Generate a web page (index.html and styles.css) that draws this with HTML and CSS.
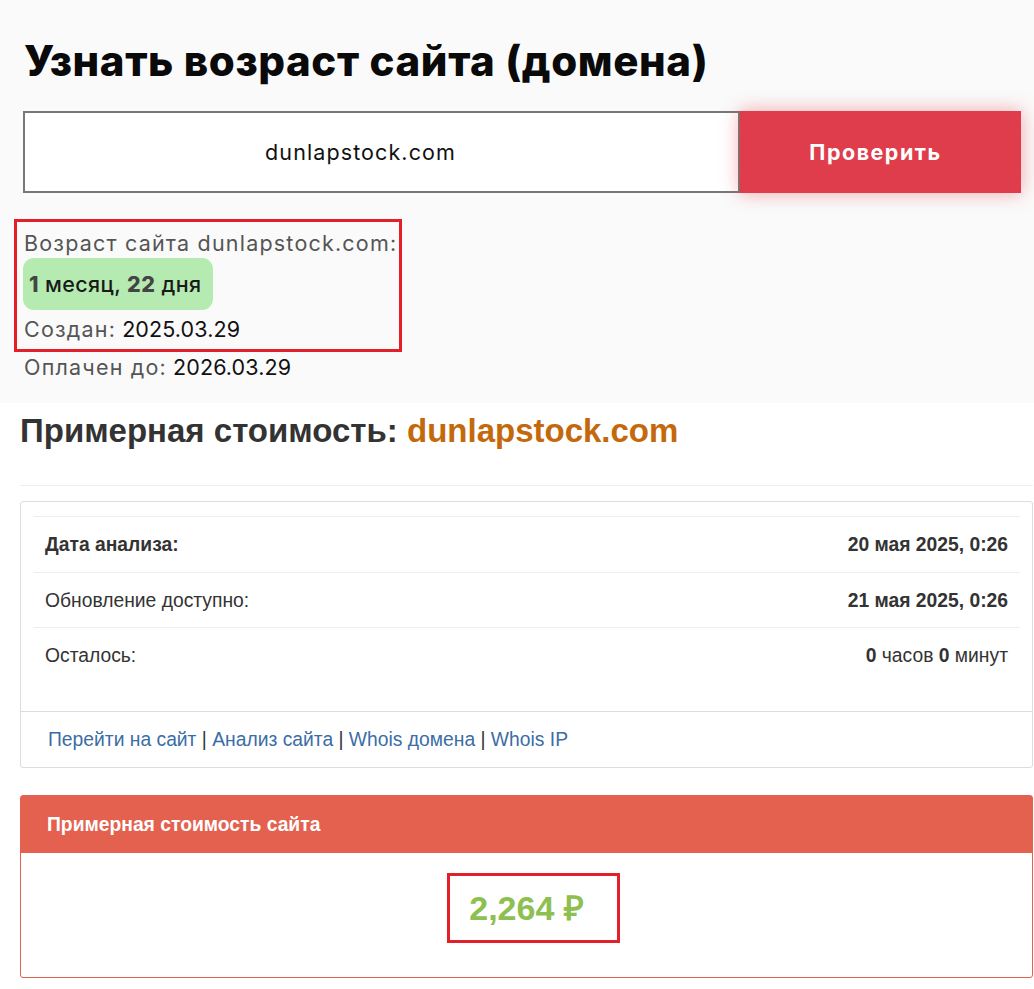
FILE: index.html
```html
<!DOCTYPE html>
<html lang="ru">
<head>
<meta charset="utf-8">
<title>Узнать возраст сайта</title>
<link rel="stylesheet" href="styles.css">
</head>
<body>
<section class="top">
  <h1 class="title">Узнать возраст сайта (домена)</h1>
  <form class="search">
    <div class="search-input">dunlapstock.com</div>
    <button class="search-btn" type="button">Проверить</button>
  </form>
  <div class="result">
    <div class="mark-box">
      <div class="line muted">Возраст сайта dunlapstock.com:</div>
      <div class="badge"><b>1</b> месяц, <b>22</b> дня</div>
      <div class="line"><span class="muted">Создан:</span> <span class="date">2025.03.29</span></div>
    </div>
    <div class="line line-last"><span class="muted">Оплачен до:</span> <span class="date">2026.03.29</span></div>
  </div>
</section>
<section class="bottom">
  <h2 class="cost-title">Примерная стоимость: <span class="domain">dunlapstock.com</span></h2>
  <hr class="sep">
  <div class="panel">
    <div class="panel-body">
      <div class="row"><span class="strong">Дата анализа:</span><span class="strong">20 мая 2025, 0:26</span></div>
      <div class="row"><span>Обновление доступно:</span><span class="strong">21 мая 2025, 0:26</span></div>
      <div class="row"><span>Осталось:</span><span><b>0</b> часов <b>0</b> минут</span></div>
    </div>
    <div class="panel-footer">
      <a class="link">Перейти на сайт</a> | <a class="link">Анализ сайта</a> | <a class="link">Whois домена</a> | <a class="link">Whois IP</a>
    </div>
  </div>
  <div class="panel panel-red">
    <div class="panel-heading">Примерная стоимость сайта</div>
    <div class="panel-value">
      <span class="value-box">2,264 ₽</span>
    </div>
  </div>
</section>
</body>
</html>
```
FILE: styles.css
```css
* { box-sizing: border-box; }
body {
  margin: 0;
  background: #ffffff;
  font-family: "Inter", "Noto Sans", sans-serif;
  color: #222;
}
.top {
  background: #fafafa;
  padding: 33px 13px 17px 23px;
}
.title {
  margin: 0 0 22px 1px;
  font-size: 42px;
  line-height: 56px;
  font-weight: 800;
  color: #0a0a0a;
  letter-spacing: 0.6px;
}
.search {
  display: flex;
  height: 82px;
}
.search-input {
  flex: 1;
  border: 2px solid #777;
  background: #fff;
  display: flex;
  align-items: center;
  justify-content: center;
  padding-right: 42px;
  font-size: 21.5px;
  letter-spacing: 1.1px;
  color: #111;
}
.search-btn {
  width: 281px;
  border: 0;
  background: #df3c4c;
  color: #fff;
  font-family: inherit;
  font-weight: 700;
  font-size: 21.5px;
  letter-spacing: 1.5px;
  padding-right: 16px;
  box-shadow: 0 0 18px rgba(230, 60, 76, 0.45);
}
.result {
  margin-top: 26px;
}
.mark-box {
  display: inline-block;
  margin-left: -9px;
  padding: 2px 2px 3px 6px;
  border: 3px solid #e3202a;
}
.line {
  font-size: 21.5px;
  line-height: 38px;
  height: 38px;
  padding-left: 1px;
  color: #111;
  white-space: nowrap;
}
.mark-box .line { height: 36px; }
.line-last { margin-top: -4px; }
.muted { color: #555; letter-spacing: 1.2px; }
.date { letter-spacing: 0.1px; }
.badge {
  display: inline-block;
  margin: -2px 0 0 0;
  padding: 0 12px 0 6px;
  height: 52px;
  line-height: 52px;
  border-radius: 11px;
  background: #b5ebb0;
  font-size: 21.5px;
  letter-spacing: 0.4px;
  font-weight: 500;
  color: #1a1a1a;
}
.badge b { font-weight: 800; color: #444; }
.bottom {
  padding: 7px 1px 0 20px;
  font-family: "Liberation Sans", Arial, sans-serif;
  color: #333;
}
.cost-title {
  margin: 0;
  font-size: 33px;
  line-height: 42px;
  font-weight: 700;
  color: #333;
}
.domain { color: #c4680c; }
.sep {
  margin: 33px 0 15px;
  border: 0;
  border-top: 1px solid #eee;
}
.panel {
  border: 1px solid #ddd;
  border-radius: 3px;
  background: #fff;
  margin-bottom: 27px;
}
.panel-body {
  padding: 14px 12px 28px 13px;
}
.row {
  display: flex;
  justify-content: space-between;
  border-top: 1px solid #eee;
  height: 55.5px;
  align-items: center;
  padding: 2px 12px 0 11px;
  font-size: 19.3px;
  color: #333;
}
.strong, .row b { font-weight: 700; }
.panel-footer {
  border-top: 1px solid #ddd;
  padding: 0 0 0 27px;
  height: 56px;
  line-height: 56px;
  font-size: 19.3px;
  color: #333;
}
.link { color: #3b6da6; }
.panel-red {
  border-color: #e46150;
}
.panel-heading {
  background: #e46150;
  color: #fff;
  font-weight: 700;
  font-size: 19.3px;
  height: 57px;
  line-height: 58px;
  padding-left: 26px;
}
.panel-value {
  height: 124px;
  display: flex;
  align-items: flex-start;
  justify-content: center;
  padding-top: 20px;
}
.value-box {
  display: inline-block;
  height: 70px;
  line-height: 64px;
  border: 3px solid #e3202a;
  padding: 0 33px 0 19px;
  font-size: 34px;
  font-weight: 700;
  color: #8dc050;
  margin-left: 14px;
}
```
